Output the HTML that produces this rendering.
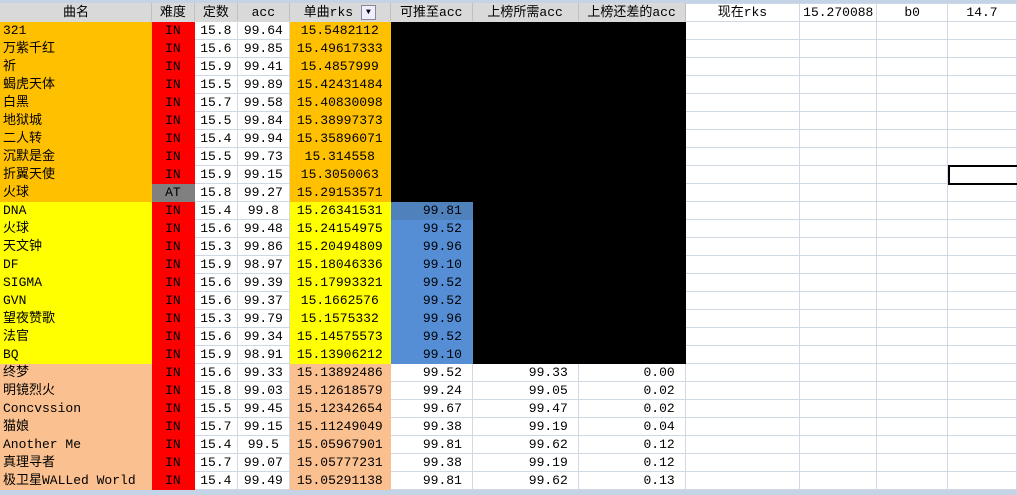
<!DOCTYPE html>
<html><head><meta charset="utf-8"><style>
body{margin:0;width:1017px;height:495px;overflow:hidden;background:#fff;position:relative;font-family:"Liberation Mono","Noto Sans CJK SC",monospace;font-size:13px;color:#000}
#top{position:absolute;left:0;top:0;width:1017px;height:3px;background:#c5d3e6}
#bot{position:absolute;left:0;top:490px;width:1017px;height:5px;background:#c5d3e6}
table{position:absolute;left:0;top:3px;border-collapse:collapse;table-layout:fixed}
td{height:17px;padding:0 2px;border:1px solid #d0d7e5;white-space:nowrap;overflow:hidden;line-height:17px}
tr.h td{background:#d9d9d9;text-align:center;border-color:#d9d9d9 #c0c0c0 #d9d9d9 #d9d9d9}
tr.h td.w{background:#fff;border-color:#d0d7e5}
.c{text-align:center}.r{text-align:right}
.o{background:#ffc000;border-color:#ffc000}.y{background:#ffff00;border-color:#ffff00}.p{background:#fac090;border-color:#fac090}.rd{background:#f00;border-color:#f00}.g{background:#808080;border-color:#808080}
.k{background:#000;border-color:#000}.b{background:#558ed5;border-color:#558ed5}.b2{background:#4f81bd;border-color:#4f81bd}
#sel{position:absolute;left:948px;top:165px;width:70px;height:16px;border:2px solid #000;box-sizing:content-box}
</style></head><body>
<div id="top"></div>
<table>
<colgroup><col style="width:151px"><col style="width:43px"><col style="width:43px"><col style="width:52px"><col style="width:101px"><col style="width:82px"><col style="width:106px"><col style="width:107px"><col style="width:115px"><col style="width:77px"><col style="width:71px"><col style="width:69px"></colgroup>
<tr class="h"><td>曲名</td><td>难度</td><td>定数</td><td>acc</td><td>单曲rks <span style="display:inline-block;width:13px;height:13px;border:1px solid #889;background:#eef;vertical-align:middle;font-size:8px;line-height:13px">▼</span></td><td>可推至acc</td><td>上榜所需acc</td><td>上榜还差的acc</td><td class="w r">现在rks</td><td class="w">15.270088</td><td class="w r">b0</td><td class="w">14.7</td></tr>
<tr><td class="o">321</td><td class="rd c">IN</td><td class="c">15.8</td><td class="c">99.64</td><td class="o c">15.5482112</td><td class="k"></td><td class="k"></td><td class="k"></td><td></td><td></td><td></td><td></td></tr>
<tr><td class="o">万紫千红</td><td class="rd c">IN</td><td class="c">15.6</td><td class="c">99.85</td><td class="o c">15.49617333</td><td class="k"></td><td class="k"></td><td class="k"></td><td></td><td></td><td></td><td></td></tr>
<tr><td class="o">祈</td><td class="rd c">IN</td><td class="c">15.9</td><td class="c">99.41</td><td class="o c">15.4857999</td><td class="k"></td><td class="k"></td><td class="k"></td><td></td><td></td><td></td><td></td></tr>
<tr><td class="o">蝎虎天体</td><td class="rd c">IN</td><td class="c">15.5</td><td class="c">99.89</td><td class="o c">15.42431484</td><td class="k"></td><td class="k"></td><td class="k"></td><td></td><td></td><td></td><td></td></tr>
<tr><td class="o">白黑</td><td class="rd c">IN</td><td class="c">15.7</td><td class="c">99.58</td><td class="o c">15.40830098</td><td class="k"></td><td class="k"></td><td class="k"></td><td></td><td></td><td></td><td></td></tr>
<tr><td class="o">地狱城</td><td class="rd c">IN</td><td class="c">15.5</td><td class="c">99.84</td><td class="o c">15.38997373</td><td class="k"></td><td class="k"></td><td class="k"></td><td></td><td></td><td></td><td></td></tr>
<tr><td class="o">二人转</td><td class="rd c">IN</td><td class="c">15.4</td><td class="c">99.94</td><td class="o c">15.35896071</td><td class="k"></td><td class="k"></td><td class="k"></td><td></td><td></td><td></td><td></td></tr>
<tr><td class="o">沉默是金</td><td class="rd c">IN</td><td class="c">15.5</td><td class="c">99.73</td><td class="o c">15.314558</td><td class="k"></td><td class="k"></td><td class="k"></td><td></td><td></td><td></td><td></td></tr>
<tr><td class="o">折翼天使</td><td class="rd c">IN</td><td class="c">15.9</td><td class="c">99.15</td><td class="o c">15.3050063</td><td class="k"></td><td class="k"></td><td class="k"></td><td></td><td></td><td></td><td></td></tr>
<tr><td class="o">火球</td><td class="g c">AT</td><td class="c">15.8</td><td class="c">99.27</td><td class="o c">15.29153571</td><td class="k"></td><td class="k"></td><td class="k"></td><td></td><td></td><td></td><td></td></tr>
<tr><td class="y">DNA</td><td class="rd c">IN</td><td class="c">15.4</td><td class="c">99.8</td><td class="y c">15.26341531</td><td class="b2 r">99.81&nbsp;</td><td class="k"></td><td class="k"></td><td></td><td></td><td></td><td></td></tr>
<tr><td class="y">火球</td><td class="rd c">IN</td><td class="c">15.6</td><td class="c">99.48</td><td class="y c">15.24154975</td><td class="b r">99.52&nbsp;</td><td class="k"></td><td class="k"></td><td></td><td></td><td></td><td></td></tr>
<tr><td class="y">天文钟</td><td class="rd c">IN</td><td class="c">15.3</td><td class="c">99.86</td><td class="y c">15.20494809</td><td class="b r">99.96&nbsp;</td><td class="k"></td><td class="k"></td><td></td><td></td><td></td><td></td></tr>
<tr><td class="y">DF</td><td class="rd c">IN</td><td class="c">15.9</td><td class="c">98.97</td><td class="y c">15.18046336</td><td class="b r">99.10&nbsp;</td><td class="k"></td><td class="k"></td><td></td><td></td><td></td><td></td></tr>
<tr><td class="y">SIGMA</td><td class="rd c">IN</td><td class="c">15.6</td><td class="c">99.39</td><td class="y c">15.17993321</td><td class="b r">99.52&nbsp;</td><td class="k"></td><td class="k"></td><td></td><td></td><td></td><td></td></tr>
<tr><td class="y">GVN</td><td class="rd c">IN</td><td class="c">15.6</td><td class="c">99.37</td><td class="y c">15.1662576</td><td class="b r">99.52&nbsp;</td><td class="k"></td><td class="k"></td><td></td><td></td><td></td><td></td></tr>
<tr><td class="y">望夜赞歌</td><td class="rd c">IN</td><td class="c">15.3</td><td class="c">99.79</td><td class="y c">15.1575332</td><td class="b r">99.96&nbsp;</td><td class="k"></td><td class="k"></td><td></td><td></td><td></td><td></td></tr>
<tr><td class="y">法官</td><td class="rd c">IN</td><td class="c">15.6</td><td class="c">99.34</td><td class="y c">15.14575573</td><td class="b r">99.52&nbsp;</td><td class="k"></td><td class="k"></td><td></td><td></td><td></td><td></td></tr>
<tr><td class="y">BQ</td><td class="rd c">IN</td><td class="c">15.9</td><td class="c">98.91</td><td class="y c">15.13906212</td><td class="b r">99.10&nbsp;</td><td class="k"></td><td class="k"></td><td></td><td></td><td></td><td></td></tr>
<tr><td class="p">终梦</td><td class="rd c">IN</td><td class="c">15.6</td><td class="c">99.33</td><td class="p c">15.13892486</td><td class="r">99.52&nbsp;</td><td class="r">99.33&nbsp;</td><td class="r">0.00&nbsp;</td><td></td><td></td><td></td><td></td></tr>
<tr><td class="p">明镜烈火</td><td class="rd c">IN</td><td class="c">15.8</td><td class="c">99.03</td><td class="p c">15.12618579</td><td class="r">99.24&nbsp;</td><td class="r">99.05&nbsp;</td><td class="r">0.02&nbsp;</td><td></td><td></td><td></td><td></td></tr>
<tr><td class="p">Concvssion</td><td class="rd c">IN</td><td class="c">15.5</td><td class="c">99.45</td><td class="p c">15.12342654</td><td class="r">99.67&nbsp;</td><td class="r">99.47&nbsp;</td><td class="r">0.02&nbsp;</td><td></td><td></td><td></td><td></td></tr>
<tr><td class="p">猫娘</td><td class="rd c">IN</td><td class="c">15.7</td><td class="c">99.15</td><td class="p c">15.11249049</td><td class="r">99.38&nbsp;</td><td class="r">99.19&nbsp;</td><td class="r">0.04&nbsp;</td><td></td><td></td><td></td><td></td></tr>
<tr><td class="p">Another Me</td><td class="rd c">IN</td><td class="c">15.4</td><td class="c">99.5</td><td class="p c">15.05967901</td><td class="r">99.81&nbsp;</td><td class="r">99.62&nbsp;</td><td class="r">0.12&nbsp;</td><td></td><td></td><td></td><td></td></tr>
<tr><td class="p">真理寻者</td><td class="rd c">IN</td><td class="c">15.7</td><td class="c">99.07</td><td class="p c">15.05777231</td><td class="r">99.38&nbsp;</td><td class="r">99.19&nbsp;</td><td class="r">0.12&nbsp;</td><td></td><td></td><td></td><td></td></tr>
<tr><td class="p">极卫星WALLed World</td><td class="rd c">IN</td><td class="c">15.4</td><td class="c">99.49</td><td class="p c">15.05291138</td><td class="r">99.81&nbsp;</td><td class="r">99.62&nbsp;</td><td class="r">0.13&nbsp;</td><td></td><td></td><td></td><td></td></tr>
</table>
<div id="sel"></div>
<div id="bot"></div>
</body></html>
